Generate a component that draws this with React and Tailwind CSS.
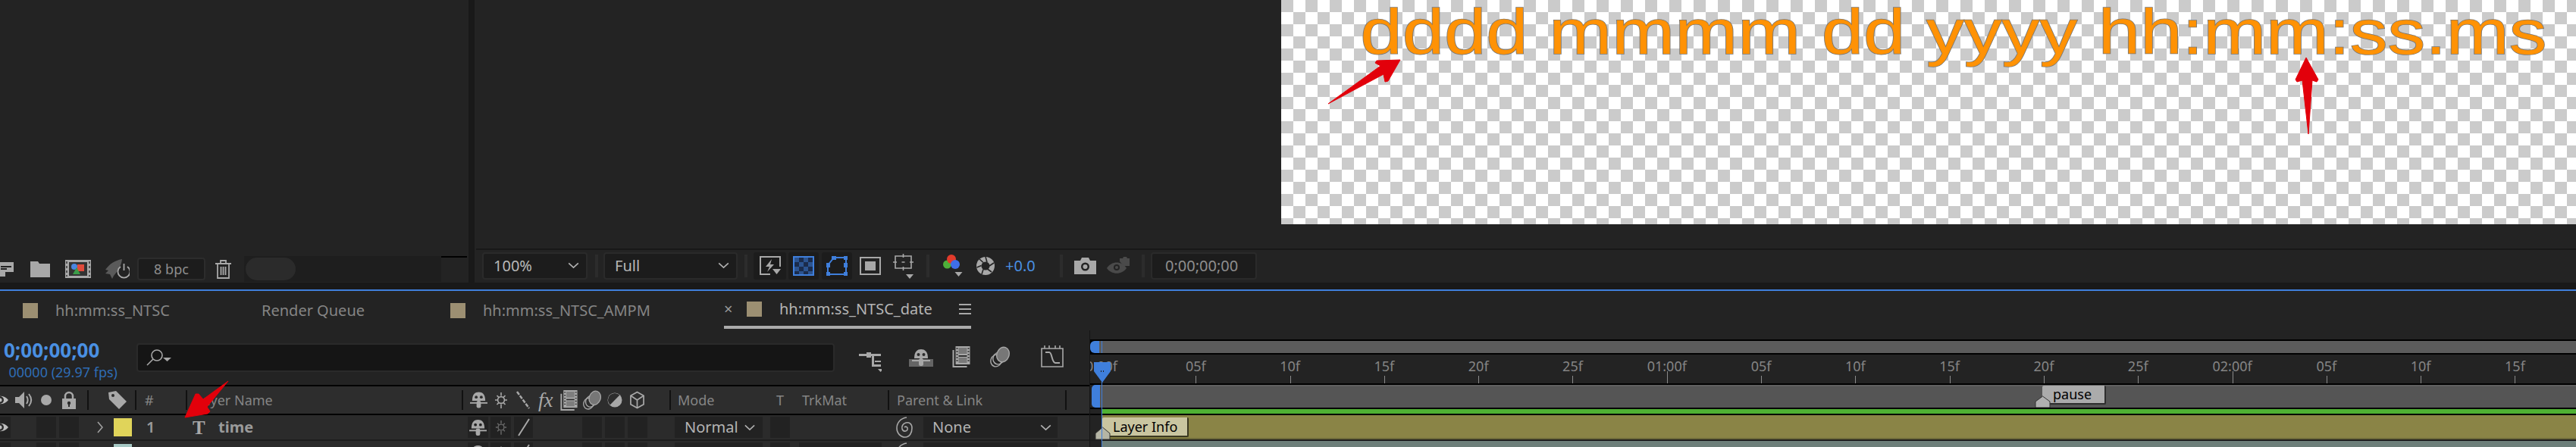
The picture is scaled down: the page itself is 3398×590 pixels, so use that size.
import React from 'react';

const Sep = ({ className = 'ml-0' }) => <div className={`w-[2px] h-[26px] bg-[#111] shrink-0 ${className}`} />;
const BarSep = () => <div className="w-[4px] h-[30px] bg-[#2c2c2c] shrink-0" />;

function Chevron({ className, color = '#b0b0b0' }) {
  return (
    <svg viewBox="0 0 16 10" className={`shrink-0 ${className}`} fill="none" stroke={color} strokeWidth="1.8">
      <path d="M1 1.5 L8 8 L15 1.5" />
    </svg>
  );
}

function Caret({ className, color = '#a8a8a8' }) {
  return (
    <svg viewBox="0 0 10 6" className={`shrink-0 ${className}`} fill={color}>
      <path d="M0 0H10L5 6Z" />
    </svg>
  );
}

function Eye({ className }) {
  return (
    <svg viewBox="0 0 24 16" className={`shrink-0 ${className}`}>
      <path d="M1 8 C6 1 18 1 23 8 C18 15 6 15 1 8Z" fill="#bdbdbd" />
      <circle cx="12" cy="8" r="5" fill="#2b2b2b" />
      <circle cx="12" cy="8" r="2.5" fill="#bdbdbd" />
    </svg>
  );
}

function Speaker({ className }) {
  return (
    <svg viewBox="0 0 23 24" className={`shrink-0 ${className}`} fill="none">
      <path d="M0 8H5L12 1V23L5 16H0Z" fill="#a8a8a8" />
      <path d="M15 7C17 10 17 14 15 17M18 4C22 9 22 15 18 20" stroke="#a8a8a8" strokeWidth="2" />
    </svg>
  );
}

function Lock({ className }) {
  return (
    <svg viewBox="0 0 18 24" className={`shrink-0 ${className}`}>
      <path d="M4 10V7a5 5 0 0 1 10 0v3" fill="none" stroke="#a8a8a8" strokeWidth="2.5" />
      <path d="M0 10H18V24H0Z" fill="#a8a8a8" />
      <circle cx="9" cy="16" r="2.2" fill="#2b2b2b" />
      <rect x="8" y="16" width="2" height="5" fill="#2b2b2b" />
    </svg>
  );
}

function Tag({ className }) {
  return (
    <svg viewBox="0 0 24 24" className={`shrink-0 ${className}`}>
      <path d="M0 2 L10 0 L24 14 L14 24 L1 11Z" fill="#a8a8a8" />
      <circle cx="6" cy="6" r="2" fill="#2b2b2b" />
    </svg>
  );
}

function Shy({ className, color = '#a8a8a8', bg = '#2b2b2b' }) {
  return (
    <svg viewBox="0 0 24 24" className={`shrink-0 ${className}`}>
      <path d="M3 13C3 4 7 1 12 1C17 1 21 4 21 13Z" fill={color} />
      <rect x="9" y="13" width="6" height="10" rx="2.5" fill={color} />
      <rect x="0" y="15" width="24" height="2" fill={color} />
      <circle cx="8.5" cy="8" r="2" fill={bg} />
      <circle cx="15.5" cy="8" r="2" fill={bg} />
    </svg>
  );
}

function Sun({ className, color = '#a8a8a8' }) {
  return (
    <svg viewBox="0 0 18 24" className={`shrink-0 ${className}`} fill="none" stroke={color} strokeWidth="1.6">
      <circle cx="9" cy="12" r="4.4" />
      <path d="M9 2V6.5M9 17.5V23M1 12H4M14 12H17M3.5 6L5.8 8.4M14.5 6L12.2 8.4M3.5 18L5.8 15.6M14.5 18L12.2 15.6" />
    </svg>
  );
}

function Film({ className, color = '#a8a8a8', bg = '#2b2b2b' }) {
  return (
    <svg viewBox="0 0 24 28" className={`shrink-0 ${className}`}>
      <path d="M1 5H3V26H20V28H1Z" fill={color} />
      <rect x="5" y="0" width="19" height="24" fill={color} />
      <rect x="9" y="2" width="11" height="8" fill={bg} opacity="0.35" />
      <rect x="9" y="12" width="11" height="1.8" fill={bg} />
      <rect x="9" y="15" width="11" height="7" fill={bg} opacity="0.35" />
      <path d="M6 3H8M6 7H8M6 11H8M6 15H8M6 19H8M21 3H23M21 7H23M21 11H23M21 15H23M21 19H23" stroke={bg} strokeWidth="1.4" />
    </svg>
  );
}

function MotionBlur({ className }) {
  return (
    <svg viewBox="0 0 28 28" className={`shrink-0 ${className}`} fill="none" stroke="#a8a8a8" strokeWidth="1.4">
      <ellipse cx="9" cy="19" rx="7" ry="8" transform="rotate(20 9 19)" />
      <ellipse cx="12" cy="16" rx="7" ry="8" transform="rotate(20 12 16)" />
      <ellipse cx="18" cy="11" rx="8" ry="10" transform="rotate(20 18 11)" fill="#777" />
    </svg>
  );
}

function Adjustment({ className }) {
  return (
    <svg viewBox="0 0 20 20" className={`shrink-0 ${className}`}>
      <circle cx="10" cy="10" r="9.5" fill="#a8a8a8" />
      <path d="M3.6 16.4A9 9 0 0 1 16.4 3.6Z" fill="#2d2d2d" />
    </svg>
  );
}

function Cube({ className }) {
  return (
    <svg viewBox="0 0 20 24" className={`shrink-0 ${className}`} fill="none" stroke="#a8a8a8" strokeWidth="1.8">
      <path d="M10 1L19 6V18L10 23L1 18V6Z" />
      <path d="M1 6L10 12L19 6M10 12V23" />
    </svg>
  );
}

function Spiral({ className }) {
  return (
    <svg viewBox="0 0 22 28" className={`shrink-0 ${className}`} fill="none" stroke="#a8a8a8" strokeWidth="1.6">
      <path d="M14 1C6 2 1 8 1 15C1 22 6 27 12 27C18 27 21 21 21 15C21 9 17 7 13 8C9 9 7 13 8 16C9 20 14 20 15 17C16 14 13 12 11 14" />
    </svg>
  );
}

function Row({ swatch, num, name, trk }) {
  return (
    <div className="h-[32px] flex items-center bg-[#2b2b2b] shrink-0">
      <div className="w-[14px] h-[28px] bg-[#222] overflow-hidden flex items-center shrink-0">
        <Eye className="w-[24px] h-[16px] -ml-[12px]" />
      </div>
      <div className="ml-[34px] w-[26px] h-[28px] bg-[#222] shrink-0" />
      <div className="ml-[4px] w-[26px] h-[28px] bg-[#222] shrink-0" />
      <svg viewBox="0 0 8 16" className="ml-[24px] w-[8px] h-[16px] shrink-0" fill="none" stroke="#a0a0a0" strokeWidth="1.6">
        <path d="M1 1L7 8L1 15" />
      </svg>
      <div className="ml-[14px] w-[24px] h-[24px] shrink-0" style={{ background: swatch }} />
      <div className="ml-[19px] w-[61px] text-[20px] text-[#9a9a9a] font-semibold leading-none shrink-0">{num}</div>
      <div className="w-[34px] text-[25px] font-['Liberation_Serif',serif] font-bold text-[#a8a8a8] leading-none shrink-0">T</div>
      <div className="w-[329px] text-[20px] text-[#9a9a9a] font-bold leading-none shrink-0">{name}</div>
      <div className="w-[27px] h-[28px] bg-[#222] flex items-center justify-center shrink-0">
        <Shy className="w-[23px] h-[23px]" bg="#222" />
      </div>
      <div className="ml-[3px] w-[27px] h-[28px] bg-[#222] flex items-center justify-center shrink-0">
        <Sun className="w-[16px] h-[22px]" color="#6a6a6a" />
      </div>
      <div className="ml-[4px] w-[25px] h-[28px] bg-[#222] flex items-center justify-center shrink-0">
        <svg viewBox="0 0 20 24" className="w-[20px] h-[24px]" stroke="#a8a8a8" strokeWidth="2">
          <path d="M3 23L17 1" />
        </svg>
      </div>
      <div className="ml-[65px] w-[26px] h-[28px] bg-[#222] shrink-0" />
      <div className="ml-[4px] w-[26px] h-[28px] bg-[#222] shrink-0" />
      <div className="ml-[4px] w-[26px] h-[28px] bg-[#222] shrink-0" />
      <div className="ml-[36px] w-[116px] h-[28px] bg-[#222] flex items-center pl-[13px] shrink-0">
        <span className="w-[79px] text-[20px] text-[#b4b4b4] leading-none">Normal</span>
        <Chevron className="w-[14px] h-[9px]" />
      </div>
      <div className="ml-[10px] w-[26px] h-[28px] bg-[#222] shrink-0" />
      {trk ? <div className="ml-[12px] w-[109px] h-[28px] bg-[#222] shrink-0 -mr-[109px]" /> : null}
      <Spiral className={`w-[22px] h-[28px] ${trk ? 'ml-[128px]' : 'ml-[140px]'}`} />
      <div className="ml-[14px] w-[177px] h-[28px] bg-[#222] flex items-center pl-[12px] pr-[8px] justify-between shrink-0">
        <span className="text-[20px] text-[#b4b4b4] leading-none">None</span>
        <Chevron className="w-[15px] h-[9px]" />
      </div>
    </div>
  );
}

const marks = ['0:00f', '05f', '10f', '15f', '20f', '25f', '01:00f', '05f', '10f', '15f', '20f', '25f', '02:00f', '05f', '10f', '15f'];

export default function App() {
  return (
    <div className="relative w-[3398px] h-[590px] overflow-hidden bg-[#191919] font-['Noto_Sans',sans-serif]">
      <div className="h-[382px] flex items-start">
        {/* project panel */}
        <div className="w-[618px] h-[373px] bg-[#232323] flex flex-col shrink-0">
          <div className="h-[338px]" />
          <div className="h-[35px] flex items-start relative">
            <div className="w-[582px] h-[34px] flex items-center shrink-0">
              <svg viewBox="0 0 22 22" className="w-[22px] h-[22px] -ml-[2px] shrink-0" fill="#a8a8a8">
                <path d="M0 2H20V15H0ZM3 7V9H17V7ZM3 10H11V12H3ZM2 15H9V21H2Z" fillRule="evenodd" />
              </svg>
              <svg viewBox="0 0 26 21" className="w-[26px] h-[21px] ml-[20px] shrink-0" fill="#a8a8a8">
                <path d="M0 0H10L12 3H26V21H0Z" />
              </svg>
              <svg viewBox="0 0 34 24" className="w-[34px] h-[24px] ml-[20px] shrink-0">
                <rect width="34" height="24" fill="#a8a8a8" />
                <rect x="5" y="3" width="24" height="18" fill="#333" />
                <path d="M2 2V5M2 8V11M2 14V17M2 20V22M32 2V5M32 8V11M32 14V17M32 20V22" stroke="#333" strokeWidth="1.5" />
                <circle cx="12" cy="9" r="4" fill="#4a86e0" />
                <rect x="16" y="6" width="9" height="9" fill="#e04b3c" />
                <path d="M10 19L15 10L20 19Z" fill="#3c9c48" />
              </svg>
              <svg viewBox="0 0 32 26" className="w-[32px] h-[26px] ml-[19px] shrink-0" fill="none">
                <path d="M0 14C6 6 12 2 22 0C21 8 18 14 11 22L9 26L6 20L0 19L4 15Z" fill="#5a5a5a" />
                <path d="M20 10A8 8 0 1 0 29 10M24.5 6V15" stroke="#a8a8a8" strokeWidth="1.8" />
              </svg>
              <div className="ml-[10px] w-[90px] h-[30px] bg-[#1c1c1c] border-2 border-[#2c2c2c] rounded-[4px] flex items-center justify-center text-[18px] text-[#8e8e8e] shrink-0">
                8 bpc
              </div>
              <svg viewBox="0 0 21 25" className="w-[21px] h-[25px] ml-[13px] shrink-0" fill="none" stroke="#a8a8a8" strokeWidth="1.8">
                <path d="M0 5H21M7 5V1H14V5M3 5V24H18V5M7.5 9V20M10.5 9V20M13.5 9V20" />
              </svg>
              <div className="ml-[17px] flex-1 h-[34px] bg-[#1e1e1e] flex items-center pl-[2px]">
                <div className="w-[66px] h-[30px] rounded-full bg-[#2b2b2b]" />
              </div>
            </div>
            <div className="w-[34px] h-[2px] bg-black shrink-0" />
          </div>
        </div>
        <div className="w-[8px] shrink-0" />

        {/* viewer */}
        <div className="flex-1 h-[373px] flex flex-col bg-[#232323] min-w-0">
          <div className="h-[328px] flex items-start">
            <div className="w-[1064px] shrink-0" />
            <div className="flex-1 h-[296px] overflow-hidden bg-[conic-gradient(#fff_25%,#cbcbcb_0_50%,#fff_0_75%,#cbcbcb_0)] bg-[length:32px_32px]">
              <div className="pl-[88px] text-[84px] leading-[84px] font-['Liberation_Sans',sans-serif] text-[#ff9205] [-webkit-text-stroke:1.5px_#777] [paint-order:stroke_fill] whitespace-nowrap origin-left scale-x-[1.185]">
                dddd mmmm dd yyyy hh:mm:ss.ms
              </div>
            </div>
          </div>
          <div className="h-[2px] bg-[#181818] ml-[2px]" />
          <div className="h-[43px] flex items-center pl-[10px] gap-[10px] -mt-px">
            <div className="w-[139px] h-[36px] bg-[#1c1c1c] border-2 border-[#2a2a2a] rounded-[4px] flex items-center justify-between pl-[13px] pr-[9px] text-[20px] text-[#b8b8b8] shrink-0">
              100%
              <Chevron className="w-[15px] h-[9px]" />
            </div>
            <BarSep />
            <div className="-ml-[3px] w-[177px] h-[36px] bg-[#1c1c1c] border-2 border-[#2a2a2a] rounded-[4px] flex items-center justify-between pl-[13px] pr-[9px] text-[20px] text-[#b8b8b8] shrink-0">
              Full
              <Chevron className="w-[15px] h-[9px]" />
            </div>
            <div className="-ml-[1px]"><BarSep /></div>
            <div className="-ml-[2px] w-[43px] h-[36px] bg-[#1c1c1c] rounded-[3px] flex items-center justify-center shrink-0">
              <svg viewBox="0 0 28 26" className="w-[28px] h-[26px]" fill="none" stroke="#a8a8a8" strokeWidth="2">
                <path d="M14 24H1V1H27V14" />
                <path d="M16 4L8 14H13L10 21L19 11H14Z" fill="#a8a8a8" stroke="none" />
                <path d="M17 17H28L22.5 24Z" fill="#a8a8a8" stroke="none" />
              </svg>
            </div>
            <div className="-ml-[7px] w-[40px] h-[36px] bg-[#1c1c1c] rounded-[3px] flex items-center justify-center shrink-0">
              <svg viewBox="0 0 28 26" className="w-[28px] h-[26px]">
                <rect width="28" height="26" fill="#3f7fdc" />
                <rect x="2" y="2" width="24" height="22" fill="#1b2c4c" />
                <path d="M2 2H8V8H2ZM14 2H20V8H14ZM8 8H14V14H8ZM20 8H26V14H20ZM2 14H8V20H2ZM14 14H20V20H14ZM8 20H14V24H8ZM20 20H26V24H20Z" fill="#2c5490" />
              </svg>
            </div>
            <div className="-ml-[6px] w-[40px] h-[36px] bg-[#1c1c1c] rounded-[3px] flex items-center justify-center shrink-0">
              <svg viewBox="0 0 28 26" className="w-[28px] h-[26px]" fill="none" stroke="#3f7fdc" strokeWidth="2">
                <path d="M10 2H26V24H2V12Z" />
                <rect x="8" y="0" width="4" height="4" fill="#3f7fdc" />
                <rect x="24" y="0" width="4" height="4" fill="#3f7fdc" />
                <rect x="0" y="10" width="4" height="4" fill="#3f7fdc" />
                <rect x="24" y="10" width="4" height="4" fill="#3f7fdc" />
                <rect x="0" y="22" width="4" height="4" fill="#3f7fdc" />
                <rect x="24" y="22" width="4" height="4" fill="#3f7fdc" />
              </svg>
            </div>
            <svg viewBox="0 0 28 24" className="w-[28px] h-[24px] shrink-0">
              <path d="M1 1H27V23H1Z" fill="none" stroke="#a8a8a8" strokeWidth="2" />
              <rect x="7" y="6" width="14" height="12" fill="#a8a8a8" />
            </svg>
            <div className="ml-[5px] w-[29px] h-[34px] relative shrink-0">
              <svg viewBox="0 0 29 24" className="w-[29px] h-[24px]" fill="none" stroke="#a8a8a8" strokeWidth="1.6">
                <path d="M4 4H25V20H4Z M14.5 1V6M14.5 18V23M1 12H6M23 12H28M12.5 12H16.5" />
              </svg>
              <Caret className="absolute left-[18px] bottom-0 w-[10px] h-[6px]" />
            </div>
            <div className="ml-[6px]"><BarSep /></div>
            <div className="ml-[8px] w-[26px] h-[30px] relative shrink-0">
              <svg viewBox="0 0 22 20" className="w-[22px] h-[20px]">
                <circle cx="5.5" cy="13" r="5.5" fill="#4eae3a" />
                <circle cx="11" cy="6" r="6" fill="#e23b2b" />
                <circle cx="16" cy="13" r="6" fill="#3f6ee8" />
              </svg>
              <Caret className="absolute right-0 top-[23px] w-[11px] h-[6px]" />
            </div>
            <svg viewBox="0 0 24 24" className="ml-[8px] w-[24px] h-[24px] shrink-0">
              <circle cx="12" cy="12" r="12" fill="#a8a8a8" />
              <circle cx="12" cy="12" r="5.5" fill="#232323" />
              <path d="M12 0L14 7M23 8L17 12M20 20L14.5 16M7 23L9 16.5M0.5 14L6.5 11.5M4 3L9 7.5" stroke="#232323" strokeWidth="1.6" />
            </svg>
            <span className="ml-[4px] w-[41px] text-[20px] text-[#4a90e2] leading-none shrink-0 whitespace-nowrap">+0.0</span>
            <div className="ml-[21px]"><BarSep /></div>
            <svg viewBox="0 0 29 22" className="ml-[5px] w-[29px] h-[22px] shrink-0">
              <path d="M0 4H8L10 0H19L21 4H29V22H0Z" fill="#a8a8a8" />
              <circle cx="14.5" cy="12" r="5.5" fill="#232323" />
              <circle cx="14.5" cy="12" r="3" fill="#a8a8a8" />
            </svg>
            <svg viewBox="0 0 30 26" className="ml-[4px] w-[30px] h-[26px] shrink-0">
              <path d="M17 7V3H21L22 1H26L27 3H30V13H22Z" fill="#4a4a4a" />
              <path d="M0 16C6 6 20 6 26 16C20 25 6 25 0 16Z" fill="#4a4a4a" />
              <circle cx="13" cy="15" r="4" fill="#232323" />
              <circle cx="13" cy="15" r="2" fill="#4a4a4a" />
            </svg>
            <div className="ml-[6px]"><BarSep /></div>
            <div className="-ml-[2px] w-[140px] h-[36px] bg-[#1c1c1c] border-2 border-[#2a2a2a] rounded-[4px] flex items-center pl-[17px] text-[20px] text-[#8e8e8e] shrink-0">
              0;00;00;00
            </div>
          </div>
        </div>
      </div>

      <div className="h-[2px] bg-[#3f7fdc]" />

      {/* tabs */}
      <div className="h-[52px] bg-[#232323] flex text-[20px] text-[#858585] leading-none whitespace-nowrap">
        <div className="flex items-center h-[48px] pt-[4px]">
          <div className="ml-[30px] w-[20px] h-[20px] bg-[#9c8f72] shrink-0" />
          <span className="ml-[23px] w-[272px]">hh:mm:ss_NTSC</span>
          <span className="w-[249px]">Render Queue</span>
          <div className="w-[20px] h-[20px] bg-[#9c8f72] shrink-0" />
          <span className="ml-[23px] w-[318px]">hh:mm:ss_NTSC_AMPM</span>
        </div>
        <div className="h-[50px] w-[326px] border-b-4 border-[#ababab] flex items-center pt-[2px]">
          <span className="w-[30px] text-[#9a9a9a]">×</span>
          <div className="w-[20px] h-[20px] bg-[#9c8f72] shrink-0" />
          <span className="ml-[23px] w-[237px] text-[#b4b4b4] shrink-0">hh:mm:ss_NTSC_date</span>
          <svg viewBox="0 0 16 14" className="w-[16px] h-[14px] shrink-0" stroke="#a8a8a8" strokeWidth="1.8">
            <path d="M0 1H16M0 7H16M0 13H16" />
          </svg>
        </div>
      </div>

      <div className="flex h-[154px]">
        {/* layer column */}
        <div className="w-[1437px] shrink-0 flex flex-col">
          <div className="h-[72px] bg-[#232323] flex items-start shrink-0">
            <div className="w-[180px] shrink-0">
              <div className="mt-[11px] ml-[5px] text-[26px] leading-[30px] font-bold text-[#4a90e2]">0;00;00;00</div>
              <div className="mt-[2px] w-[155px] flex justify-end whitespace-nowrap overflow-hidden text-[18px] leading-[24px] text-[#2f6db5]">00000 (29.97 fps)</div>
            </div>
            <div className="mt-[17px] w-[921px] h-[38px] bg-[#151515] border-2 border-[#2a2a2a] rounded-[4px] flex items-center pl-[11px] shrink-0">
              <svg viewBox="0 0 34 24" className="w-[34px] h-[24px]" fill="none" stroke="#a8a8a8" strokeWidth="1.6">
                <circle cx="14" cy="9" r="7" />
                <path d="M9 14L1 22" />
                <path d="M22 12H33L27.5 17Z" fill="#a8a8a8" stroke="none" />
              </svg>
            </div>
            <svg viewBox="0 0 30 30" className="mt-[26px] ml-[32px] w-[30px] h-[30px] shrink-0" fill="#a8a8a8">
              <path d="M0 5H10V3H16V5H29V8H16V10H10V8H0ZM17 7H20V19H29V16H21V14H29V22H17Z" />
              <path d="M25 25H32L28.5 29Z" />
            </svg>
            <div className="mt-[24px] ml-[36px] w-[32px] h-[24px] relative shrink-0">
              <Shy className="w-[32px] h-[24px]" />
              <div className="absolute bottom-0 left-0 w-[32px] h-[10px] bg-[#a8a8a8] opacity-50" />
            </div>
            <Film className="mt-[21px] ml-[23px] w-[27px] h-[28px]" bg="#232323" />
            <div className="mt-[21px] ml-[24px]"><MotionBlur className="w-[28px] h-[28px]" /></div>
            <svg viewBox="0 0 30 30" className="mt-[19px] ml-[40px] w-[30px] h-[30px] shrink-0" fill="none" stroke="#a8a8a8" strokeWidth="1.6">
              <path d="M1 5H29V29H1Z" />
              <path d="M5 1V5M11 1V5M19 1V5M25 1V5" />
              <path d="M6 10H11C15 10 14 23 19 24H25" strokeWidth="2" />
            </svg>
          </div>

          <div className="h-[2px] bg-black shrink-0" />

          <div className="h-[36px] flex items-center bg-[#2d2d2d] text-[18px] text-[#858585] leading-none whitespace-nowrap shrink-0">
            <Eye className="w-[24px] h-[16px] -ml-[12px]" />
            <Speaker className="ml-[8px] w-[23px] h-[24px]" />
            <div className="ml-[11px] w-[14px] h-[14px] rounded-full bg-[#a8a8a8] shrink-0" />
            <Lock className="ml-[14px] w-[18px] h-[24px]" />
            <Sep className="ml-[15px]" />
            <Tag className="ml-[26px] w-[24px] h-[24px]" />
            <Sep className="ml-[11px]" />
            <span className="ml-[11px] w-[54px] shrink-0">#</span>
            <Sep />
            <span className="ml-[11px] w-[351px] shrink-0">Layer Name</span>
            <Sep />
            <Shy className="ml-[9px] w-[23px] h-[24px]" bg="#2d2d2d" />
            <Sun className="ml-[9px] w-[18px] h-[24px]" />
            <svg viewBox="0 0 20 24" className="ml-[10px] w-[20px] h-[24px] shrink-0" stroke="#a8a8a8" strokeWidth="2.5" strokeDasharray="5 1.5">
              <path d="M2 1L18 23" />
            </svg>
            <span className="ml-[10px] w-[21px] text-[27px] italic font-['Liberation_Serif',serif] text-[#a8a8a8] shrink-0">fx</span>
            <Film className="ml-[7px] w-[24px] h-[27px]" bg="#2d2d2d" />
            <MotionBlur className="ml-[6px] w-[26px] h-[26px]" />
            <Adjustment className="ml-[7px] w-[20px] h-[20px]" />
            <Cube className="ml-[10px] w-[19px] h-[24px]" />
            <Sep className="ml-[33px]" />
            <span className="ml-[9px] w-[130px] shrink-0">Mode</span>
            <span className="w-[34px] shrink-0">T</span>
            <span className="w-[113px] shrink-0">TrkMat</span>
            <Sep />
            <span className="ml-[10px] w-[222px] shrink-0">Parent &amp; Link</span>
            <Sep />
          </div>

          <div className="h-[2px] bg-black shrink-0" />

          <Row swatch="#e0d45a" num="1" name="time" />
          <div className="h-[2px] bg-[#1d1d1d] shrink-0" />
          <Row swatch="#a6c8c4" num="" name="" trk />
        </div>

        {/* timeline */}
        <div className="relative flex-1 min-w-0 border-l border-[#151515] flex flex-col bg-[#232323] overflow-hidden">
          <div className="h-[12px] shrink-0" />
          <div className="h-[20px] bg-black py-[2px] shrink-0">
            <div className="h-[16px] flex">
              <div className="w-[12px] rounded-l-[6px] bg-[#3f7fdc]" />
              <div className="flex-1 bg-[#5c5c5c]" />
            </div>
          </div>

          <div className="h-[38px] flex pl-[15px] shrink-0">
            {marks.map((m, i) => {
              const major = m.includes(':') && i > 0;
              return (
                <div key={i} className="w-[124.3px] shrink-0 flex flex-col">
                  <div className={`w-fit -translate-x-1/2 text-[18px] leading-[20px] text-[#858585] pt-[5px] ${major ? 'h-[22px]' : 'h-[28px]'}`}>{m}</div>
                  {i > 0 ? <div className={`w-px bg-[#8a8a8a] ${major ? 'h-[16px]' : 'h-[10px]'}`} /> : null}
                </div>
              );
            })}
          </div>

          <div className="h-[2px] bg-black shrink-0" />
          <div className="h-[30px] flex shrink-0 bg-[#232323] pl-[2px]">
            <div className="w-[11px] rounded-l-[5px] bg-[#3f7fdc]" />
            <div className="flex-1 bg-[#555] border-t-2 border-[#606060]" />
          </div>
          <div className="h-[2px] bg-black shrink-0" />
          <div className="h-[6px] bg-[#4fb033] ml-[15px] shrink-0" />
          <div className="h-[2px] bg-black shrink-0" />
          <div className="h-[32px] ml-[15px] bg-[#8a8446] border-b-2 border-[#6e6a3a] shrink-0" />
          <div className="h-[2px] bg-[#1d1d1d] shrink-0" />
          <div className="h-[8px] ml-[15px] bg-[#6d7f7a] shrink-0" />

          {/* markers */}
          <div className="absolute left-[16px] top-[115px] w-[114px] h-[26px] bg-[#c9c5a0] border-b-2 border-r-2 border-[#3a3820] rounded-[2px] pl-[14px] text-[18px] leading-[24px] text-black whitespace-nowrap">Layer Info</div>
          <svg viewBox="0 0 21 18" className="absolute left-[6px] top-[127px] w-[21px] h-[18px]">
            <path d="M1 17V9L10.5 1L20 9V17Z" fill="#b5b5a5" stroke="#333" strokeWidth="1" />
          </svg>
          <div className="absolute left-[1256px] top-[73px] w-[84px] h-[25px] bg-[#ababab] border-b-2 border-r-2 border-[#2e2e2e] rounded-[2px] pl-[14px] text-[18px] leading-[22px] text-black">pause</div>
          <svg viewBox="0 0 21 16" className="absolute left-[1246px] top-[86px] w-[21px] h-[16px]">
            <path d="M1 16V8L10.5 1L20 8V16Z" fill="#b0b0b0" stroke="#333" strokeWidth="1" />
          </svg>

          {/* playhead */}
          <div className="absolute left-[15px] top-[14px] w-px h-[16px] bg-[#3f7fdc]" />
          <div className="absolute left-[15px] top-[42px] bottom-0 w-px bg-[#3f7fdc]" />
          <svg viewBox="0 0 22 27" className="absolute left-[5px] top-[42px] w-[22px] h-[27px]">
            <path d="M0 0H22V12L11 27L0 12Z" fill="#3f7fdc" />
            <path d="M9 12H10M12 12H13" stroke="#222" strokeWidth="2" />
          </svg>
        </div>
      </div>

      {/* red annotation arrows drawn on the screenshot */}
      <svg className="absolute inset-0 w-[3398px] h-[590px] pointer-events-none" viewBox="0 0 3398 590">
        <g fill="#e2000b" stroke="#e2000b" strokeLinejoin="round" strokeWidth="1">
          <path d="M1752 137L1821 87L1814 83L1816 80L1847 79L1831 107L1827 108L1825 98Z" />
          <path d="M3042 76L3058 105L3056 108L3050 106L3045 177L3037 106L3030 108L3028 105Z" />
          <path d="M244 551L258 520L262 520L268 527L301 503L273 537L277 543L274 546Z" />
        </g>
      </svg>
    </div>
  );
}
